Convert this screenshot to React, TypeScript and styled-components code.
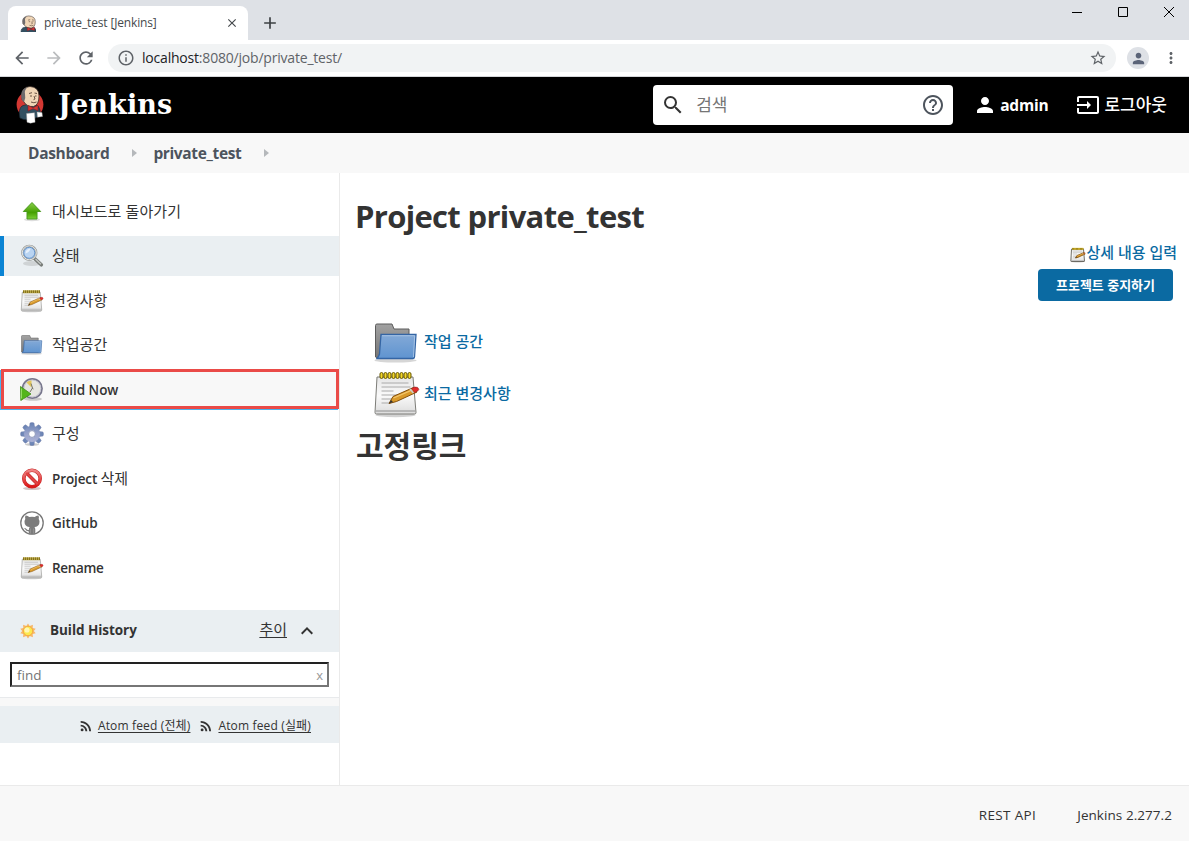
import React from "react";
import styled, { createGlobalStyle } from "styled-components";
import {
  MdArrowBack, MdArrowForward, MdRefresh, MdInfoOutline, MdStarBorder, MdPerson, MdMoreVert,
  MdSearch, MdHelpOutline, MdInput, MdRssFeed, MdExpandLess, MdClose, MdAdd,
} from "react-icons/md";

const Global = createGlobalStyle`
  * { box-sizing: border-box; }
  body { margin: 0; background: #fff; color: #333; font-family: "Open Sans", "Noto Sans CJK KR", sans-serif; }
  svg { display: block; flex: none; }
`;

const Page = styled.div`
  width: 1189px;
  height: 841px;
  display: flex;
  flex-direction: column;
  overflow: hidden;
`;

const Text = styled.span<{ $size: number; $weight?: number; $track?: number; $color?: string }>`
  font-size: ${(p) => p.$size}px;
  font-weight: ${(p) => p.$weight ?? 400};
  letter-spacing: ${(p) => p.$track ?? 0}px;
  color: ${(p) => p.$color ?? "inherit"};
  line-height: 20px;
  white-space: pre;
`;

/* Browser window */
const TabStrip = styled.div`
  height: 40px;
  background: #dee1e6;
  display: flex;
  align-items: flex-start;
`;
const Tab = styled.div`
  width: 240px;
  height: 34px;
  margin: 6px 0 0 8px;
  padding: 0 9px 0 12px;
  display: flex;
  align-items: center;
  background: #fff;
  border-radius: 8px 8px 0 0;
  color: #45494d;
`;
const TabTitle = styled(Text)`
  flex: 1;
  margin-left: 8px;
`;
const NewTab = styled.div`
  margin: 13px 0 0 12px;
  color: #3c4043;
`;
const WindowButtons = styled.div`
  display: flex;
  gap: 34px;
  margin: 6px 14px 0 auto;
`;
const Toolbar = styled.div`
  height: 37px;
  border-bottom: 1px solid #d5d7da;
  display: flex;
  align-items: center;
  padding: 0 9px 0 12px;
  color: #5f6368;
`;
const NavButtons = styled.div`
  display: flex;
  gap: 12px;
  width: 96px;
  & > :nth-child(2) { color: #babcbe; }
`;
const Address = styled.div`
  flex: 1;
  height: 28px;
  border-radius: 14px;
  background: #f1f3f4;
  display: flex;
  align-items: center;
  padding: 0 9px;
  gap: 7px;
`;
const Url = styled(Text)`
  flex: 1;
  b { font-weight: 400; color: #202124; }
`;
const Avatar = styled.div`
  width: 22px;
  height: 22px;
  border-radius: 50%;
  background: #dee1e6;
  color: #5b6478;
  display: grid;
  place-items: center;
  margin: 0 13px 0 11px;
`;

/* Jenkins header */
const Header = styled.header`
  height: 56px;
  background: #000;
  color: #fff;
  display: flex;
  align-items: center;
  padding: 0 22px 0 15px;
`;
const Wordmark = styled.span`
  font: 700 27px/40px "DejaVu Serif", serif;
  letter-spacing: 0.15px;
  margin-left: 13px;
  padding-bottom: 1px;
  flex: 1;
`;
const SearchBox = styled.div`
  width: 300px;
  height: 40px;
  border-radius: 4px;
  background: #fff;
  color: #333;
  display: flex;
  align-items: center;
  padding: 0 8px;
  margin-right: 20px;
`;
const SearchHint = styled(Text)`
  flex: 1;
  margin-left: 11px;
`;
const HeaderLink = styled.div`
  display: flex;
  align-items: center;
  gap: 3px;
  & + & { margin-left: 28px; gap: 4px; }
`;

const Breadcrumbs = styled.nav`
  height: 40px;
  background: #f8f8f8;
  color: #4d545d;
  display: flex;
  align-items: center;
  padding: 0 0 0 28px;
`;
const Caret = styled.i`
  border: 4px solid transparent;
  border-left: 5px solid #b5b8bb;
  border-right: 0;
  margin: 0 16px 0 23px;
`;

/* Body */
const Body = styled.div`
  height: 612px;
  display: flex;
`;
const Side = styled.aside`
  width: 340px;
  border-right: 1px solid #eaeaea;
`;
const Tasks = styled.div`
  padding-top: 18.5px;
  height: 437px;
  display: flex;
  flex-direction: column;
  gap: 4.5px;
`;
const Task = styled.div<{ $state?: "active" | "boxed" }>`
  height: 40px;
  display: flex;
  align-items: center;
  gap: 8px;
  padding-left: ${(p) => (p.$state ? 16 : 20)}px;
  background: ${(p) => (p.$state === "active" ? "#eaeff2" : p.$state === "boxed" ? "#f8f8f8" : "transparent")};
  ${(p) => p.$state === "active" && "border-left: 4px solid #0b84d4;"}
  ${(p) => p.$state === "boxed" && "border: 3px solid #ea4b48; margin: -0.5px 0 0.5px 1px; box-shadow: -1px 1px 0 #4ab4f0;"}
`;
const TaskLabel = styled(Text)<{ $lift: number }>`
  padding-bottom: ${(p) => Math.max(p.$lift, 0)}px;
  padding-top: ${(p) => Math.max(-p.$lift, 0)}px;
`;
const HistoryHead = styled.div`
  height: 42px;
  background: #eaeff2;
  display: flex;
  align-items: center;
  padding: 0 20px 0 20px;
`;
const HistoryTitle = styled(Text)`
  flex: 1;
  margin-left: 14px;
  padding-bottom: 2px;
`;
const FindRow = styled.div`
  height: 46px;
  padding: 10px;
  border-bottom: 1px solid #e8eaec;
`;
const Find = styled.div`
  height: 25px;
  border: 2px solid;
  border-color: #222 #767676 #767676 #222;
  display: flex;
  justify-content: space-between;
  align-items: center;
  padding: 0 4px 0 5px;
`;
const Spacer = styled.div`
  height: 8px;
  background: #f8f8f8;
`;
const Feeds = styled.div`
  height: 37px;
  background: #eaeff2;
  display: flex;
  align-items: center;
  justify-content: flex-end;
  padding: 2px 28px 0 0;
  svg { margin: 1px 4px 0 8px; }
`;
const Underlined = styled(Text)`
  text-decoration: underline;
  text-underline-offset: 2px;
`;
const Trend = styled(Underlined)`
  padding-bottom: 5px;
  margin-right: 8px;
`;
const Main = styled.main`
  flex: 1;
  padding: 19px 12px 0 16px;
  color: #0b6aa2;
`;
const Title = styled.h1<{ $size: number; $track: number; $top?: number; $left?: number }>`
  margin: ${(p) => p.$top ?? 0}px 0 0 ${(p) => p.$left ?? 0}px;
  color: #333;
  font-size: ${(p) => p.$size}px;
  font-weight: 700;
  letter-spacing: ${(p) => p.$track}px;
  line-height: 48px;
  white-space: nowrap;
`;
const Actions = styled.div`
  display: flex;
  flex-direction: column;
  align-items: flex-end;
  padding-top: 2px;
  height: 76px;
`;
const EditLink = styled.div`
  display: flex;
  align-items: center;
  height: 20px;
  svg { margin-top: 5px; }
`;
const Button = styled.button`
  width: 135px;
  height: 32px;
  border: 0;
  border-radius: 4px;
  background: #0b6aa2;
  color: #fff;
  font: 700 13px/20px "Open Sans", "Noto Sans CJK KR", sans-serif;
  padding: 0 0 1px;
  margin: 7px 4px 0 0;
`;
const Shortcut = styled.div`
  height: 52px;
  display: flex;
  align-items: center;
  gap: 4px;
  padding-left: 16px;
  span { padding-bottom: 2px; }
`;
const Footer = styled.footer`
  height: 56px;
  border-top: 1px solid #eaeaea;
  background: #f8f8f8;
  display: flex;
  justify-content: flex-end;
  align-items: center;
  gap: 41px;
  padding: 3px 17px 0 0;
`;

/* Drawings */
const Butler = ({ w, h, badge }: { w: number; h: number; badge?: boolean }) => (
  <svg width={w} height={h} viewBox={badge ? "0 0 30 40" : "3 0 22 28"} preserveAspectRatio={badge ? undefined : "none"}>
    {badge && <ellipse cx="15" cy="19.500" rx="13.400" ry="13.500" fill="#d33833" />}
    <path d="M5 33Q3 24 7 21L13 19L23 21Q26 24 25 31L18 34Q10 36 5 33Z" fill="#335061" stroke="#1c2a33" strokeWidth=".7" />
    <path d="M7 10Q7 2 15 1.500Q24 2 24 11Q24 20 18.500 21.500Q12 22 9 17Q6 15 7 10Z" fill="#f0d6b7" stroke="#3b2e2a" strokeWidth=".8" />
    <path d="M7 15Q4 4 13 2Q9 5 10 9Q11 13 9 17Z" fill="#6d6b6d" />
    <path d="M14 8.500l3-.8M19.500 8l2.500.5M15 11h2M20 11h1.500M19 11l1 3-1.500.7M16 17q3 1.500 5.500 0" fill="none" stroke="#5a4437" strokeWidth=".9" />
    <path d="M13 20.500l5 2.200 5-2.400v5.400l-5-2-5 2.400z" fill="#d33833" stroke="#81131d" strokeWidth=".5" />
    {badge && <path d="M11.500 28.500l8-.8.6 9.500-4.600 1-3.500-1zM22 27l5 .5.500 4-5 .7z" fill="#fff" stroke="#999" strokeWidth=".4" />}
  </svg>
);

const UpArrow = () => (
  <svg width="24" height="24" viewBox="0 1 24 24">
    <ellipse cx="12" cy="20.700" rx="8" ry="1.600" fill="#ddd" />
    <path d="M12 3.500L20.700 12.500H17V20H7V12.500H3.300Z" fill="url(#up)" stroke="#4a9a20" />
    <defs><linearGradient id="up" x2="0" y2="1"><stop stopColor="#8ad04a" /><stop offset=".6" stopColor="#45a000" /><stop offset="1" stopColor="#7bcf35" /></linearGradient></defs>
  </svg>
);
const Magnifier = () => (
  <svg width="24" height="24" viewBox="0 0 24 24">
    <ellipse cx="12" cy="19.500" rx="9" ry="2.500" fill="#cfd3d5" />
    <path d="M14.500 14.500l6.800 6.300" stroke="#777b78" strokeWidth="3.600" strokeLinecap="round" />
    <path d="M15.500 15l5.500 5.200" stroke="#c5c8c5" strokeWidth="1.300" />
    <circle cx="9.300" cy="8.800" r="7" fill="#b4cfec" stroke="#999c9a" strokeWidth="2.200" />
    <circle cx="9.300" cy="8.800" r="7" fill="none" stroke="#e8e8e5" />
    <circle cx="9.300" cy="8.800" r="5.500" fill="#b9d4f2" stroke="#6594cb" />
    <path d="M5.500 9.500q0-4.500 5-5-1 4-5 5" fill="#e6f0fb" />
  </svg>
);
const Notepad = ({ size }: { size: number }) => (
  <svg width={size} height={size} viewBox={size === 48 ? "-0.5 -0.5 48 48" : "0 0 48 48"}>
    <ellipse cx="23" cy="44.500" rx="20" ry="2.200" fill="#d2d2d2" />
    <path d="M4.500 6.500H40.500L43.500 42Q43.500 43.500 42 43.500H4Q2.500 43.500 2.500 42Z" fill="url(#paper)" stroke={size < 20 ? "#55534a" : "#7d7d78"} strokeWidth={size < 20 ? 2.5 : 1} />
    <path d="M3 40.500h40" stroke="#aaa" strokeWidth="1.500" />
    <path d="M9 12.500h27M9 16.500h29M9 20.500h12M9 24.500h18M9 28.500h14M9 32.500h9" stroke="#aaa" strokeWidth="1.100" />
    {size === 48 ? (
      <g fill="#f3d72c" stroke="#665700">
        {[0, 1, 2, 3, 4, 5, 6, 7].map((i) => <rect key={i} x={7.5 + i * 4} y="2" width="3" height="6" rx="1.500" />)}
      </g>
    ) : (
      <g>
        <path d="M6 2.500h34v6H6z" fill={size === 24 ? "#b9a647" : "#e0bf2c"} />
        <path d="M6 5.500h34" stroke="#85731d" strokeWidth="5" strokeDasharray="2 2" />
      </g>
    )}
    <path d="M16.500 33l4-7L41 17l3.500 4.500L24 31z" fill="#d99a2b" stroke="#85500c" strokeLinejoin="round" strokeWidth={size < 20 ? 2.5 : 1} />
    <path d="M21 27.500l20-8.700" stroke="#f3c66d" strokeWidth="1.300" />
    <path d="M16.500 33l2-3.500 2 2z" fill="#333" />
    <path d="M39 18l3-1.400q4-.6 4.300 2.400-.3 1.500-4 3.200z" fill={size < 20 ? "#b5722c" : "#e22c2c"} stroke="#8d2020" strokeWidth=".6" />
    <path d="M37.500 18.600l3.300 4" stroke="#ccc" strokeWidth="1.500" />
    <defs><linearGradient id="paper" x2="0" y2="1"><stop stopColor="#e6e6e6" /><stop offset=".5" stopColor="#fafafa" /><stop offset="1" stopColor="#dcdcdc" /></linearGradient></defs>
  </svg>
);
const Folder = ({ size }: { size: number }) => (
  <svg width={size} height={size} viewBox={size === 48 ? "-0.5 -1 48 48" : "0 0 48 48"}>
    <ellipse cx="23" cy="41.500" rx="21" ry="2" fill="#d6d6d6" />
    <path d="M3 6.500Q3 5 4.500 5H19.500L21.500 10H36.500V39H4.500L3 38Z" fill="url(#tab)" stroke="#5c5c5c" />
    <path d="M8.500 15.500H43.500L42 38Q42 39.500 40.500 39.500H4.500Q6.500 37 7 35Z" fill="url(#fold)" stroke="#3465a4" strokeWidth="1.300" />
    <path d="M9.500 16.700H42.200L41 38" fill="none" stroke="#b4cdea" strokeWidth=".8" />
    <defs>
      <linearGradient id="tab" x2="0" y2="1"><stop stopColor="#a2a2a2" /><stop offset="1" stopColor="#757575" /></linearGradient>
      <linearGradient id="fold" x2="0" y2="1"><stop stopColor="#83a9d7" /><stop offset="1" stopColor="#5f94d0" /></linearGradient>
    </defs>
  </svg>
);
const Clock = () => (
  <svg width="24" height="24" viewBox="0 0 24 24">
    <ellipse cx="13" cy="22" rx="9" ry="1.700" fill="#c9c9c9" />
    <circle cx="12.300" cy="11.500" r="9.700" fill="#e6e6e0" stroke="#77768c" strokeWidth="1.800" />
    <circle cx="12.300" cy="11.500" r="8.500" fill="none" stroke="#c3c3cf" />
    <path d="M11.500 10.500L6.500 5.500Q8.500 3.500 11.500 3.500Z" fill="#e2c75b" />
    <path d="M11 6.500l1.500 4.500L10 15M12 11l1.500 1" fill="none" stroke="#77756a" />
    <path d="M.5 9.500L11 17L.8 23.500Z" fill="#54b51c" stroke="#3f8e18" strokeWidth=".8" />
    <path d="M1.500 11.500v10" stroke="#94dd62" />
  </svg>
);
const Gear = () => (
  <svg width="24" height="24" viewBox="0 0 24 24">
    <ellipse cx="12" cy="22.500" rx="7" ry="1.400" fill="#ccc" />
    <g fill="url(#gear)" stroke="#7783ae" strokeWidth=".5">
      {[0, 45, 90, 135, 180, 225, 270, 315].map((a) => (
        <path key={a} d="M9.300 6.500L10 1Q12 0 14 1L14.700 6.500Z" transform={`rotate(${a} 12 12)`} />
      ))}
    </g>
    <circle cx="12" cy="12" r="5.700" fill="none" stroke="url(#gear)" strokeWidth="4.600" />
    <circle cx="12" cy="12" r="3.400" fill="#fff" stroke="#7480aa" strokeWidth=".8" />
    <defs><linearGradient id="gear" gradientUnits="userSpaceOnUse" x1="12" y1="0" x2="12" y2="24"><stop stopColor="#6480b2" /><stop offset=".5" stopColor="#99a3cb" /><stop offset="1" stopColor="#b5badb" /></linearGradient></defs>
  </svg>
);
const Forbidden = () => (
  <svg width="24" height="24" viewBox="0 0 24 24">
    <ellipse cx="12" cy="21.500" rx="9" ry="1.600" fill="#d3c7c7" />
    <circle cx="12" cy="11.500" r="8.200" fill="#fff" stroke="#c62626" strokeWidth="3.600" />
    <path d="M6.300 5.800L17.700 17.200" stroke="#c62626" strokeWidth="3.400" />
    <circle cx="12" cy="11.500" r="8.200" fill="none" stroke="url(#no)" strokeWidth="2.600" />
    <path d="M6.300 5.800L17.700 17.200" stroke="#e04444" strokeWidth="2.200" />
    <defs><linearGradient id="no" x2="0" y2="1"><stop stopColor="#ef8585" /><stop offset="1" stopColor="#dc1717" /></linearGradient></defs>
  </svg>
);
const Octocat = () => (
  <svg width="24" height="24" viewBox="0 0 24 24">
    <circle cx="12" cy="12" r="11.200" fill="#fff" stroke="#777" strokeWidth="1.300" />
    <path d="M5.500 4.500Q7.500 4.300 9.300 6Q12 5.400 14.700 6Q16.500 4.300 18.500 4.500Q19.300 6.300 18.700 8Q20 9.800 19.300 12.400Q18.300 15.500 14.500 16Q15.300 17 15.300 18.500V22.500Q12 23.800 8.700 22.500V20.200Q6.300 20.500 5.300 18.500Q4.500 17.300 3.800 17Q5.300 16.500 6.500 18Q7.500 19.300 8.900 18.700Q8.900 17 9.700 16Q5.700 15.500 4.700 12.400Q4 9.800 5.300 8Q4.700 6.300 5.500 4.500Z" fill="#7c7c7c" />
    <path d="M10.500 17.500v5M13.500 17.500v5" stroke="#999" strokeWidth=".7" />
  </svg>
);
const Sun = () => (
  <svg width="16" height="16" viewBox="0 0 16 16">
    <path d="M8 .5l1.700 2.600 3.200-1.400-.2 3.300 3 .8L13.800 8l1.900 2.300-3 .7.200 3.300-3.200-1.200L8 15.500l-1.700-2.400-3.200 1.200.2-3.300-3-.7L2.200 8 .3 5.800l3-.8-.2-3.300 3.200 1.400z" fill="#f8b768" />
    <circle cx="8" cy="8" r="4.700" fill="#fce94f" stroke="#f0a33c" strokeWidth=".8" />
    <circle cx="7" cy="7" r="2.600" fill="#fff7b5" />
  </svg>
);

type Item = { icon: React.ReactNode; label: string; hangul?: string; size: number; track?: number; lift: number; state?: "active" | "boxed" };
const items: Item[] = [
  { icon: <UpArrow />, label: "대시보드로 돌아가기", size: 15, track: 0.1, lift: 2 },
  { icon: <Magnifier />, label: "상태", size: 15, lift: 2, state: "active" },
  { icon: <Notepad size={24} />, label: "변경사항", size: 15, lift: 2 },
  { icon: <Folder size={24} />, label: "작업공간", size: 15, lift: 2 },
  { icon: <Clock />, label: "Build Now", size: 13.5, track: -0.05, lift: -2, state: "boxed" },
  { icon: <Gear />, label: "구성", size: 15, lift: 2 },
  { icon: <Forbidden />, label: "Project ", hangul: "삭제", size: 13.5, track: -0.12, lift: 0 },
  { icon: <Octocat />, label: "GitHub", size: 13.5, track: -0.08, lift: 0 },
  { icon: <Notepad size={24} />, label: "Rename", size: 13.5, track: -0.35, lift: 0 },
];

export default function App() {
  return (
    <Page>
      <Global />
      <TabStrip>
        <Tab>
          <Butler w={16} h={17} />
          <TabTitle $size={12} $track={-0.15}>private_test [Jenkins]</TabTitle>
          <MdClose size={14} />
        </Tab>
        <NewTab><MdAdd size={20} /></NewTab>
        <WindowButtons>
          <svg width="12" height="12" stroke="#000"><path d="M1 6.500h10" /></svg>
          <svg width="12" height="12" stroke="#000" fill="none"><path d="M1.500 1.500h9v9h-9z" /></svg>
          <svg width="12" height="12" stroke="#000"><path d="M1 1l10 10M11 1L1 11" /></svg>
        </WindowButtons>
      </TabStrip>
      <Toolbar>
        <NavButtons><MdArrowBack size={20} /><MdArrowForward size={20} /><MdRefresh size={20} /></NavButtons>
        <Address>
          <MdInfoOutline size={18} />
          <Url $size={14} $track={-0.2}><b>localhost</b>:8080/job/private_test/</Url>
          <MdStarBorder size={18} />
        </Address>
        <Avatar><MdPerson size={17} /></Avatar>
        <MdMoreVert size={18} />
      </Toolbar>
      <Header>
        <Butler w={30} h={40} badge />
        <Wordmark>Jenkins</Wordmark>
        <SearchBox>
          <MdSearch size={24} />
          <SearchHint $size={17} $color="#757575">검색</SearchHint>
          <MdHelpOutline size={24} color="#4d545d" />
        </SearchBox>
        <HeaderLink><MdPerson size={24} /><Text $size={15.5} $weight={700} $track={-0.2}>admin</Text></HeaderLink>
        <HeaderLink><MdInput size={24} /><Text $size={17} $weight={500}>로그아웃</Text></HeaderLink>
      </Header>
      <Breadcrumbs>
        <Text $size={15.5} $weight={700} $track={-0.33}>Dashboard</Text><Caret />
        <Text $size={15.5} $weight={700} $track={-0.36}>private_test</Text><Caret />
      </Breadcrumbs>
      <Body>
        <Side>
          <Tasks>
            {items.map((it) => (
              <Task key={it.label} $state={it.state}>
                {it.icon}
                <TaskLabel $size={it.size} $weight={it.size === 15 ? 400 : 600} $track={it.track} $lift={it.lift}>
                  {it.label}{it.hangul && <Text $size={15}>{it.hangul}</Text>}
                </TaskLabel>
              </Task>
            ))}
          </Tasks>
          <HistoryHead>
            <Sun />
            <HistoryTitle $size={13.5} $weight={700} $track={-0.05}>Build History</HistoryTitle>
            <Trend $size={15}>추이</Trend>
            <MdExpandLess size={24} />
          </HistoryHead>
          <FindRow>
            <Find><Text $size={13.5} $color="#757575">find</Text><Text $size={13} $color="#999">x</Text></Find>
          </FindRow>
          <Spacer />
          <Feeds>
            <MdRssFeed size={16} /><Underlined $size={12} $track={0.15}>Atom feed (전체)</Underlined>
            <MdRssFeed size={16} /><Underlined $size={12} $track={0.15}>Atom feed (실패)</Underlined>
          </Feeds>
        </Side>
        <Main>
          <Title $size={31} $track={-0.68} $left={-1}>Project private_test</Title>
          <Actions>
            <EditLink><Notepad size={16} /><Text $size={15} $weight={500}>상세 내용 입력</Text></EditLink>
            <Button>프로젝트 중지하기</Button>
          </Actions>
          <Shortcut><Folder size={48} /><Text $size={15} $weight={500}>작업 공간</Text></Shortcut>
          <Shortcut><Notepad size={48} /><Text $size={15} $weight={500}>최근 변경사항</Text></Shortcut>
          <Title $size={30} $track={0} $top={2}>고정링크</Title>
        </Main>
      </Body>
      <Footer>
        <Text $size={13.5} $weight={500} $track={0.35}>REST API</Text>
        <Text $size={13.5} $weight={500} $track={0.06}>Jenkins 2.277.2</Text>
      </Footer>
    </Page>
  );
}
